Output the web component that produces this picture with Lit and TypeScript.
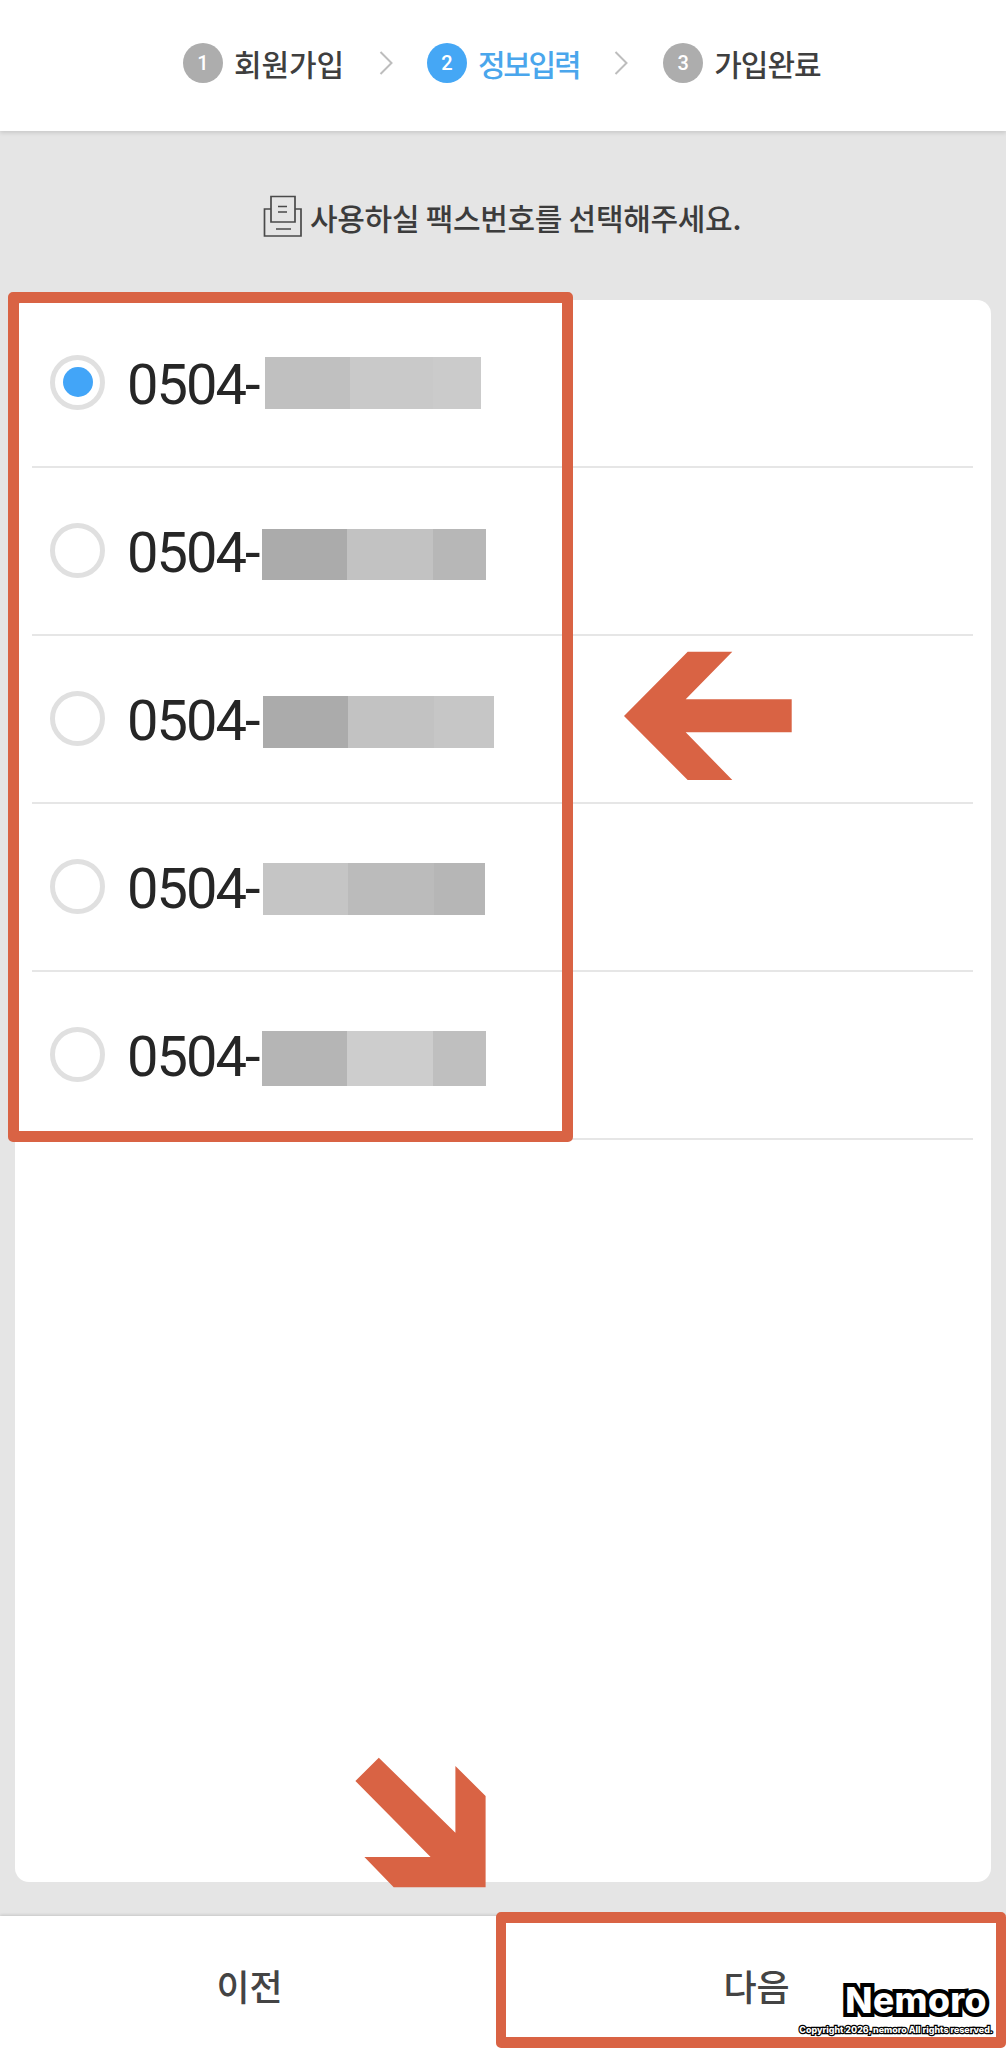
import { LitElement, html, css, svg } from "lit";
import { customElement } from "lit/decorators.js";

interface Seg { w: number; c: string; }
interface Row { on: boolean; ml: number; h: number; dy: number; segs: Seg[]; }

const ROWS: Row[] = [
  { on: true, ml: 3, h: 52, dy: 0, segs: [{ w: 85, c: "#c0c0c0" }, { w: 83, c: "#c9c9c9" }, { w: 48, c: "#cbcbcb" }] },
  { on: false, ml: 0, h: 51, dy: 3.5, segs: [{ w: 85, c: "#ababab" }, { w: 86, c: "#c2c2c2" }, { w: 53, c: "#b7b7b7" }] },
  { on: false, ml: 1, h: 52, dy: 3, segs: [{ w: 85, c: "#ababab" }, { w: 86, c: "#c2c2c2" }, { w: 60, c: "#c6c6c6" }] },
  { on: false, ml: 1, h: 52, dy: 1.5, segs: [{ w: 85, c: "#c5c5c5" }, { w: 86, c: "#bbbbbb" }, { w: 51, c: "#b6b6b6" }] },
  { on: false, ml: 0, h: 55, dy: 3.5, segs: [{ w: 85, c: "#b5b5b5" }, { w: 86, c: "#cdcdcd" }, { w: 53, c: "#bfbfbf" }] },
];

const STEPS = [
  { n: "1", t: "회원가입", cls: "" },
  { n: "2", t: "정보입력", cls: "active" },
  { n: "3", t: "가입완료", cls: "last" },
];

const chevron = svg`<svg class="chev" width="14" height="24" viewBox="0 0 14 24"><path d="M1.5 1 L12.5 12 L1.5 23" fill="none" stroke="#bdbdbd" stroke-width="2"/></svg>`;

@customElement("app-root")
export class AppRoot extends LitElement {
  static styles = css`
    :host {
      display: block;
      width: 1006px;
      height: 2048px;
      position: relative;
      overflow: hidden;
      font-family: "Noto Sans CJK KR", "Noto Sans", sans-serif;
      color: #3a3a3a;
    }
    .page { display: flex; flex-direction: column; height: 2048px; background: #e5e5e5; }

    .header {
      height: 131px;
      box-sizing: border-box;
      background: #fff;
      box-shadow: 0 2px 4px rgba(0, 0, 0, 0.12);
      display: flex;
      align-items: center;
      padding: 0 0 5px 183px;
      position: relative;
    }
    .step { display: flex; align-items: center; gap: 11px; }
    .num {
      width: 40px; height: 40px; border-radius: 50%;
      background: #adadad; color: #fff;
      display: flex; align-items: center; justify-content: center;
      font: 500 20px "Roboto", sans-serif;
    }
    .label { font-size: 30px; font-weight: 500; line-height: 40px; color: #3f3f3f; letter-spacing: -0.1px; white-space: nowrap; }
    .step.active .label { color: #4aa6ec; letter-spacing: -2.3px; }
    .step.active .num { background: #45a7f5; }
    .step.last .label { letter-spacing: -1px; }
    .chev { margin: 0 34px 0 35px; flex: none; }
    .step.active + .chev { margin: 0 35px 0 35px; }

    .notice {
      height: 169px;
      display: flex; align-items: center; justify-content: flex-start;
      padding-left: 263px;
      gap: 8px;
    }
    .notice svg { flex: none; }
    .notice span { font-size: 30px; font-weight: 500; letter-spacing: -0.3px; color: #3c3c3c; white-space: nowrap; margin-top: 2px; }

    .card {
      flex: 1;
      margin: 0 15px;
      background: #fff;
      border-radius: 14px;
      padding: 0 18px 0 17px;
    }
    .row {
      height: 168px;
      box-sizing: border-box;
      border-bottom: 2px solid #e6e6e6;
      display: flex;
      align-items: center;
      padding-left: 18px;
    }
    .radio {
      width: 55px; height: 55px; box-sizing: border-box;
      border-radius: 50%;
      border: 5px solid #e0e0e0;
      display: flex; align-items: center; justify-content: center;
      flex: none;
      margin-top: -2px;
    }
    .radio i { width: 30px; height: 30px; border-radius: 50%; background: #42a5f8; display: block; }
    .num-text {
      font-family: "Roboto", "Noto Sans", sans-serif;
      font-size: 56px;
      font-weight: 400;
      line-height: 60px;
      letter-spacing: -2px;
      color: #262626;
      margin: 4px 0 0 22px;
      width: 135px;
      flex: none;
      white-space: nowrap;
    }
    .mosaic { display: flex; flex: none; }
    .mosaic b { display: block; height: 100%; }

    .footer {
      margin-top: 34px;
      height: 132px;
      background: #fff;
      box-shadow: 0 -1px 3px rgba(0, 0, 0, 0.14);
      display: flex;
    }
    .btn {
      flex: 1;
      display: flex; align-items: center; justify-content: center;
      font-size: 36px; font-weight: 500; color: #444;
      padding-top: 6px;
    }
    .btn + .btn { padding-left: 8px; }

    .mark { position: absolute; pointer-events: none; box-sizing: border-box; border: 11px solid #d96344; border-radius: 5px; }
    .mark.list { left: 8px; top: 292px; width: 565px; height: 850px; }
    .mark.next { left: 496px; top: 1912px; width: 510px; height: 136px; border-width: 11px 10px; }
    .arrows { position: absolute; left: 0; top: 0; pointer-events: none; }

    .wm {
      position: absolute; right: 13px; bottom: 13px;
      display: flex; flex-direction: column; align-items: flex-end;
      color: #fff; font-family: "Inter", "Roboto", sans-serif; font-weight: 800;
    }
    .wm .brand {
      font-size: 35.5px; line-height: 35px; margin-right: 6px; letter-spacing: 0.4px;
      -webkit-text-stroke: 8px #000; paint-order: stroke fill;
    }
    .wm .copy {
      font-size: 8.9px; line-height: 11px; margin-top: 6px; white-space: nowrap; letter-spacing: 0;
      -webkit-text-stroke: 2.4px #000; paint-order: stroke fill;
    }
  `;

  render() {
    return html`
      <div class="page">
        <header class="header">
          ${STEPS.map((s, i) => html`
            <div class="step ${s.cls}">
              <span class="num">${s.n}</span>
              <span class="label">${s.t}</span>
            </div>
            ${i < 2 ? chevron : ""}
          `)}
        </header>
        <div class="notice">
          <svg width="39" height="42" viewBox="0 0 39 42" fill="none" stroke="#4a4a4a" stroke-width="1.7">
            <path d="M8 27 V1.5 H32 V27 Z"/>
            <path d="M8 14 H1.5 V41 H38 V14 H32"/>
            <path d="M15 11.5 H24 M15 17 H24 M13 34 H28"/>
          </svg>
          <span>사용하실 팩스번호를 선택해주세요.</span>
        </div>
        <section class="card">
          ${ROWS.map((r) => html`
            <div class="row">
              <span class="radio">${r.on ? html`<i></i>` : ""}</span>
              <span class="num-text">0504-</span>
              <span class="mosaic" style="margin-left:${r.ml}px;height:${r.h}px;margin-top:${r.dy * 2}px">
                ${r.segs.map((s) => html`<b style="width:${s.w}px;background:${s.c}"></b>`)}
              </span>
            </div>
          `)}
        </section>
        <footer class="footer">
          <div class="btn">이전</div>
          <div class="btn">다음</div>
        </footer>
      </div>

      <div class="mark list"></div>
      <div class="mark next"></div>
      <svg class="arrows" width="1006" height="2048" viewBox="0 0 1006 2048" fill="#d96344">
        <polygon points="624,716 687.7,651.7 732.3,651.7 685.7,699.3 791.7,699.3 791.7,732.3 685.7,732.3 732.3,780 687.7,780"/>
        <polygon points="378.8,1757.7 455.4,1832.7 455.4,1766 485.6,1796 485.6,1887.3 393.7,1887.3 364.4,1857 430.6,1857 355.4,1781"/>
      </svg>
      <div class="wm">
        <span class="brand">Nemoro</span>
        <span class="copy">Copyright 2026, nemoro All rights reserved.</span>
      </div>
    `;
  }
}
